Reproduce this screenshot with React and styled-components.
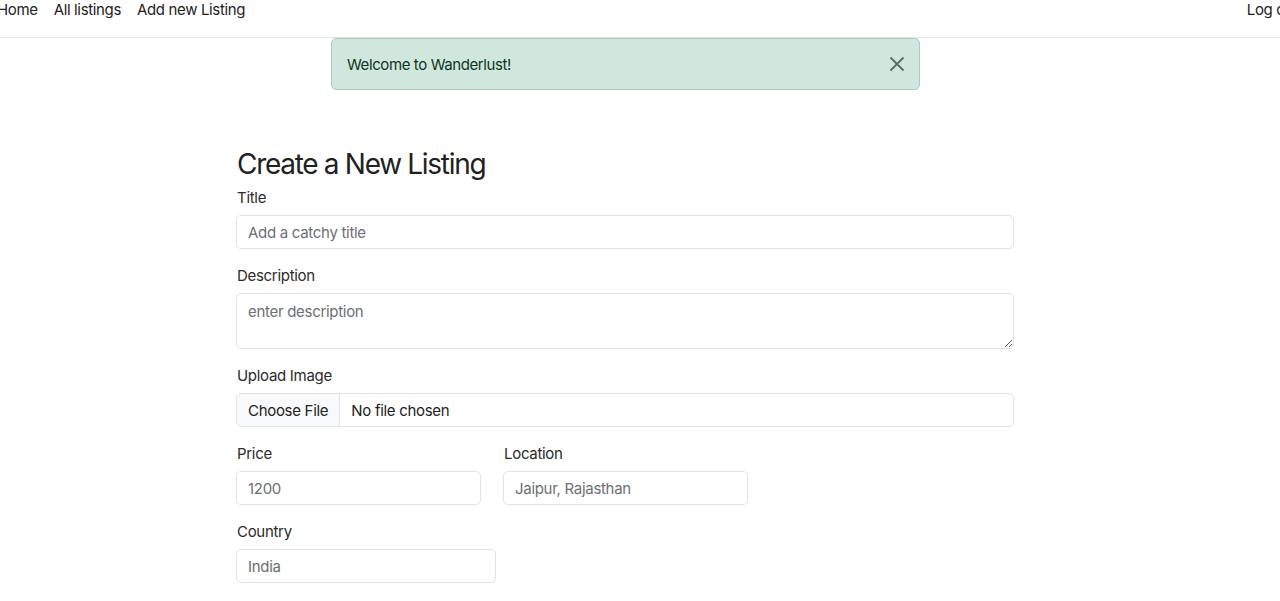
import React from 'react'
import styled, { createGlobalStyle } from 'styled-components'

/* Page-wide reset: the sheet is wider than the window, so clip sideways */
const Global = createGlobalStyle`
  html, body {
    margin: 0;
    overflow-x: hidden;
    background: #fff;
    font-family: Inter, "Open Sans", sans-serif;
    color: #222;
  }
`

/* Top navigation bar */
const Nav = styled.nav`
  display: flex;
  align-items: flex-start;
  justify-content: space-between;
  height: 38px;
  margin: 0 -18px 0 -3px;
  border-bottom: 1px solid #e6e6e6;
  box-sizing: border-box;
`

const NavGroup = styled.div`
  display: flex;
  gap: 16px;
`

const NavLink = styled.a`
  font-size: 15px;
  line-height: 20px;
  letter-spacing: -0.35px;
  color: #222;
  text-decoration: none;
`

/* Flash message */
const Alert = styled.div`
  display: flex;
  align-items: center;
  justify-content: space-between;
  width: 589px;
  height: 52px;
  box-sizing: border-box;
  margin: 0 0 0 331px;
  padding: 0 14px 0 15px;
  background: #d1e7dd;
  border: 1px solid #a3cfbb;
  border-radius: 5px;
  color: #0a3622;
  font-size: 15px;
  letter-spacing: -0.4px;
`

const Close = styled.button`
  display: flex;
  border: none;
  background: none;
  padding: 0;
  cursor: pointer;
`

/* Form */
const Form = styled.form`
  width: 778px;
  margin: 57px 0 0 236px;
  display: flex;
  flex-direction: column;
`

const Heading = styled.h3`
  margin: 0 0 7px 1px;
  font-size: 28px;
  font-weight: 400;
  line-height: 34px;
  letter-spacing: -1.3px;
  color: #212121;
`

const Field = styled.div`
  display: flex;
  flex-direction: column;
  width: ${p => p.$width || '100%'};
  margin-bottom: 17px;
`

const Row = styled.div`
  display: flex;
  gap: 22px;
`

const Label = styled.label`
  font-size: 15px;
  line-height: 20px;
  letter-spacing: -0.3px;
  color: #2b2b2b;
  margin: 0 0 7px 1px;
`

const Input = styled.input`
  height: 34px;
  box-sizing: border-box;
  border: 1px solid #e0e3e6;
  border-radius: 5px;
  padding: 0 11px;
  font-family: inherit;
  font-size: 15px;
  letter-spacing: -0.3px;
  color: #333;
  &::placeholder {
    color: #6c6f73;
  }
`

const TextArea = styled.textarea`
  height: 56px;
  box-sizing: border-box;
  border: 1px solid #e0e3e6;
  border-radius: 5px;
  padding: 8px 11px;
  font-family: inherit;
  font-size: 15px;
  letter-spacing: -0.3px;
  &::placeholder {
    color: #6c6f73;
  }
`

const FileBox = styled.div`
  display: flex;
  height: 34px;
  box-sizing: border-box;
  border: 1px solid #e0e3e6;
  border-radius: 5px;
  overflow: hidden;
  font-size: 15px;
  letter-spacing: -0.3px;
`

const FileButton = styled.span`
  display: flex;
  align-items: center;
  padding: 0 11px;
  background: #f8f9fa;
  border-right: 1px solid #e0e3e6;
  color: #222;
`

const FileName = styled.span`
  display: flex;
  align-items: center;
  padding: 0 11px;
  color: #222;
`

export default function App() {
  return (
    <>
      <Global />
      <Nav>
        <NavGroup>
          <NavLink href="#">Home</NavLink>
          <NavLink href="#">All listings</NavLink>
          <NavLink href="#">Add new Listing</NavLink>
        </NavGroup>
        <NavLink href="#">Log out</NavLink>
      </Nav>

      <Alert>
        <span>Welcome to Wanderlust!</span>
        <Close aria-label="Close">
          <svg width="16" height="16" viewBox="0 0 16 16">
            <path d="M1.5 1.5l13 13M14.5 1.5l-13 13" stroke="#5b6b63" strokeWidth="1.8" />
          </svg>
        </Close>
      </Alert>

      <Form>
        <Heading>Create a New Listing</Heading>
        <Field>
          <Label>Title</Label>
          <Input placeholder="Add a catchy title" />
        </Field>
        <Field>
          <Label>Description</Label>
          <TextArea placeholder="enter description" />
        </Field>
        <Field>
          <Label>Upload Image</Label>
          <FileBox>
            <FileButton>Choose File</FileButton>
            <FileName>No file chosen</FileName>
          </FileBox>
        </Field>
        <Row>
          <Field $width="245px">
            <Label>Price</Label>
            <Input placeholder="1200" />
          </Field>
          <Field $width="245px">
            <Label>Location</Label>
            <Input placeholder="Jaipur, Rajasthan" />
          </Field>
        </Row>
        <Field $width="260px">
          <Label>Country</Label>
          <Input placeholder="India" />
        </Field>
      </Form>
    </>
  )
}
